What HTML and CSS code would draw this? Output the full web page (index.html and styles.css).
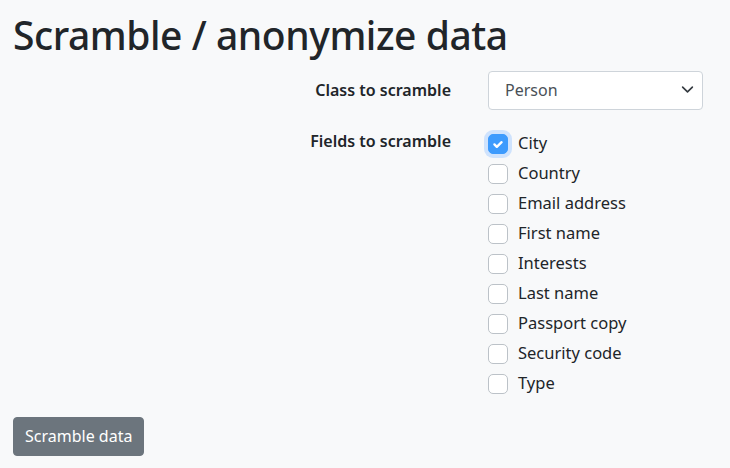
FILE: index.html
```html
<!DOCTYPE html>
<html lang="en">
<head>
    <meta charset="UTF-8">
    <meta name="viewport" content="width=device-width, initial-scale=1.0">
    <title>Scramble / anonymize data</title>
    <link rel="stylesheet" href="styles.css">
</head>
<body>
    <div class="page">
        <h1>Scramble / anonymize data</h1>

        <form class="scramble-form">
            <div class="form-row">
                <label for="class-select" class="row-label">Class to scramble</label>
                <div class="select-wrap">
                    <select id="class-select" class="form-select">
                        <option>Person</option>
                    </select>
                    <svg class="select-arrow" viewBox="0 0 16 16" width="16" height="16">
                        <path d="M2 5l6 6 6-6" fill="none" stroke="#343a40" stroke-width="2" stroke-linecap="round" stroke-linejoin="round"/>
                    </svg>
                </div>
            </div>

            <div class="form-row fields-row">
                <span class="row-label">Fields to scramble</span>
                <div class="check-list">
                    <label class="check-item"><span class="check-box checked">
                        <svg viewBox="0 0 20 20" width="20" height="20"><path d="M6 10.5l2.7 2.7L14 8" fill="none" stroke="#fff" stroke-width="2.6" stroke-linecap="round" stroke-linejoin="round"/></svg>
                    </span>City</label>
                    <label class="check-item"><span class="check-box"></span>Country</label>
                    <label class="check-item"><span class="check-box"></span>Email address</label>
                    <label class="check-item"><span class="check-box"></span>First name</label>
                    <label class="check-item"><span class="check-box"></span>Interests</label>
                    <label class="check-item"><span class="check-box"></span>Last name</label>
                    <label class="check-item"><span class="check-box"></span>Passport copy</label>
                    <label class="check-item"><span class="check-box"></span>Security code</label>
                    <label class="check-item"><span class="check-box"></span>Type</label>
                </div>
            </div>

            <button type="button" class="btn-scramble">Scramble data</button>
        </form>
    </div>
</body>
</html>
```

FILE: styles.css
```css
body {
    margin: 0;
    background-color: #f8f9fa;
    color: #212529;
    font-family: "Noto Sans", "Open Sans", sans-serif;
    font-size: 16px;
    line-height: 1.5;
}

.page {
    padding: 12px 13px 0 13px;
}

h1 {
    margin: 0 0 12px 0;
    font-size: 39px;
    font-weight: 500;
    line-height: 1.2;
    letter-spacing: -0.45px;
}

.form-row {
    display: grid;
    grid-template-columns: 1fr 215px;
    column-gap: 37px;
    padding-right: 14px;
    align-items: center;
}

.fields-row {
    margin-top: 19px;
    align-items: start;
}

.row-label {
    text-align: right;
    font-weight: 600;
    font-size: 16px;
}

.select-wrap {
    position: relative;
}

.form-select {
    display: block;
    width: 100%;
    height: 39px;
    padding: 6px 36px 6px 16px;
    font-family: inherit;
    font-size: 16px;
    color: #495057;
    background-color: #fff;
    border: 1px solid #ced4da;
    border-radius: 4px;
    appearance: none;
}

.select-arrow {
    position: absolute;
    right: 9px;
    top: 12px;
    width: 13px;
    height: 13px;
    pointer-events: none;
}

.check-list {
    display: flex;
    flex-direction: column;
}

.check-item {
    display: flex;
    align-items: center;
    gap: 10px;
    height: 30px;
    font-size: 16.5px;
}

.check-box {
    width: 20px;
    height: 20px;
    box-sizing: border-box;
    border: 1px solid #bcc2c8;
    border-radius: 5px;
    background-color: #fff;
    flex-shrink: 0;
}

.check-box.checked {
    border-color: #3d9bfd;
    background-color: #3d9bfd;
    box-shadow: 0 0 0 4px #cfe3fd;
}

.check-box svg {
    display: block;
    width: 18px;
    height: 18px;
}

.btn-scramble {
    margin-top: 18px;
    padding: 6px 11px;
    height: 39px;
    font-family: inherit;
    font-size: 16px;
    color: #fff;
    background-color: #6c757d;
    border: 1px solid #6c757d;
    border-radius: 4px;
}
```
